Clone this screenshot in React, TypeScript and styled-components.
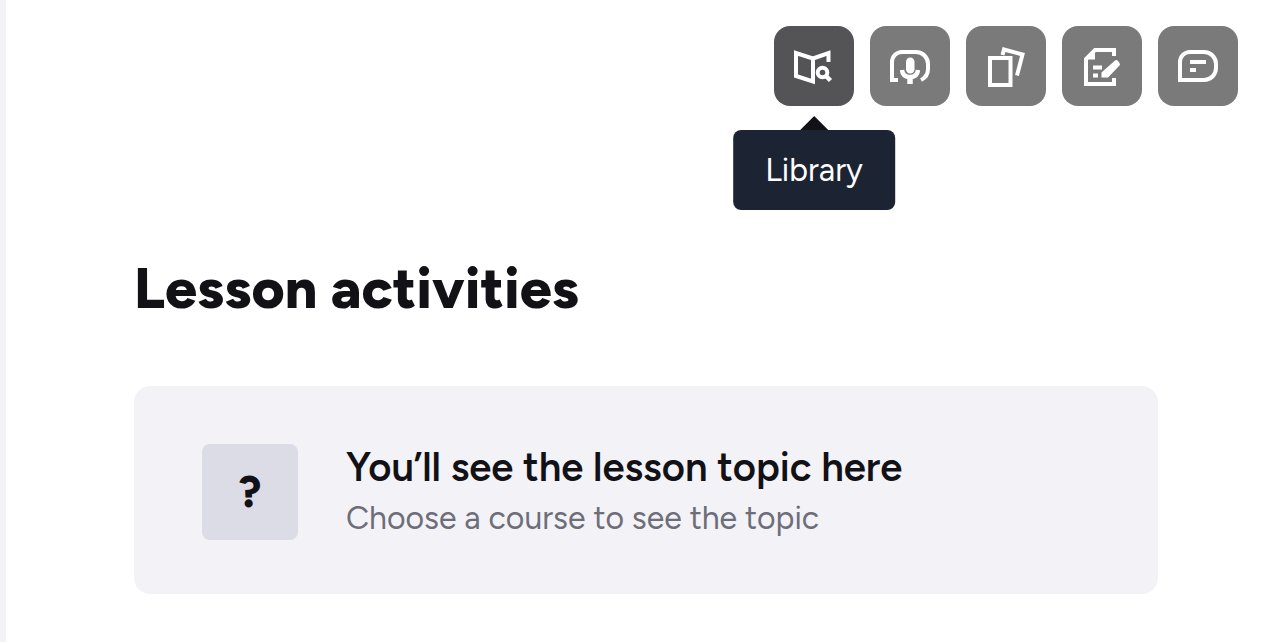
import React from 'react';
import styled, { createGlobalStyle } from 'styled-components';

const GlobalStyle = createGlobalStyle`
  *, *::before, *::after { box-sizing: border-box; }
  body {
    margin: 0;
    background: #ffffff;
    color: #111116;
    font-family: Figtree, Lato, "Liberation Sans", sans-serif;
  }
`;

const Page = styled.div`
  min-height: 100vh;
  border-left: 6px solid #f3f3f6;
`;

const Toolbar = styled.nav`
  display: flex;
  justify-content: flex-end;
  gap: 16px;
  padding: 26px 32px 0;
`;

const ToolItem = styled.div`
  position: relative;
`;

const ToolButton = styled.button<{ $active?: boolean }>`
  display: block;
  width: 80px;
  height: 80px;
  padding: 0;
  border: 0;
  border-radius: 16px;
  background: ${(p) => (p.$active ? '#545456' : '#7a7a7b')};
  color: #ffffff;
  cursor: pointer;
`;

const Glyph = styled.svg`
  display: block;
  width: 80px;
  height: 80px;
  fill: none;
  stroke: currentColor;
  stroke-width: 4;
`;

const Tooltip = styled.div`
  position: absolute;
  top: 104px;
  left: 50%;
  transform: translateX(-50%);
  padding: 20px 32px;
  border-radius: 8px;
  background: #1c2333;
  color: #ffffff;
  font-size: 32px;
  line-height: 40px;
  white-space: nowrap;

  &::before {
    content: '';
    position: absolute;
    bottom: 100%;
    left: 50%;
    margin-left: -14px;
    border: 14px solid transparent;
    border-top-width: 0;
    border-bottom-color: #111116;
  }
`;

const Main = styled.main`
  padding: 144px 112px 48px 128px;
`;

const Title = styled.h1`
  margin: 0 0 60px;
  font-size: 57px;
  line-height: 76px;
  font-weight: 800;
`;

const Card = styled.section`
  display: flex;
  align-items: center;
  gap: 48px;
  padding: 56px 68px 52px;
  border-radius: 16px;
  background: #f3f3f7;
`;

const Badge = styled.div`
  display: flex;
  flex: none;
  align-items: center;
  justify-content: center;
  width: 96px;
  height: 96px;
  border-radius: 8px;
  background: #dcdce6;
  font-size: 44px;
  line-height: 48px;
  font-weight: 800;
`;

const CardTitle = styled.h2`
  margin: 0 0 2px;
  font-size: 40px;
  line-height: 50px;
  font-weight: 560;
`;

const CardText = styled.p`
  margin: 0;
  color: #6e6e7a;
  font-size: 32px;
  line-height: 48px;
`;

const tools = [
  {
    label: 'Library',
    icon: (
      <>
        <path d="M22 27V50L39 55.500V32.500ZM39 32.500L54.500 27V36" />
        <circle cx="48.500" cy="46.500" r="4.800" />
        <path d="M51.500 49.500L56.500 54.500" strokeWidth="4.500" />
      </>
    ),
  },
  {
    label: 'Speaking',
    icon: (
      <>
        <path d="M28 54H22V36A10 10 0 0 1 32 26H46A12 12 0 0 1 58 38V43C58 49 55 52 51 54" />
        <rect x="36" y="31.500" width="8.500" height="16" rx="4.250" fill="currentColor" stroke="none" />
        <path d="M32 44C32.500 49 36 51 40 51S47.500 49 48 44" strokeWidth="4.500" />
        <path d="M40 51V58" strokeWidth="5.500" />
      </>
    ),
  },
  {
    label: 'Cards',
    icon: (
      <>
        <rect x="24" y="32" width="20.500" height="27" />
        <path d="M36.500 29L38 23.500L56.500 28.500L51 49.500" />
      </>
    ),
  },
  {
    label: 'Homework',
    icon: (
      <>
        <path d="M52 30V24H33L24 33V58H52V52" />
        <path d="M33 24V33.500H24Z" fill="currentColor" stroke="none" />
        <path d="M31 41.500H40M31 49.500H36" />
        <path d="M39.500 46.500L53 34.500Q54.500 33.500 56 35L57.500 37Q58.500 38.500 57.500 39.500L46 51.500H39.500Z" fill="currentColor" stroke="none" />
      </>
    ),
  },
  {
    label: 'Chat',
    icon: (
      <>
        <path d="M22 54V36A10 10 0 0 1 32 26H46A12 12 0 0 1 58 38V42A12 12 0 0 1 46 54Z" />
        <path d="M32 36H48M32 44H38" />
      </>
    ),
  },
];

export default function App() {
  return (
    <Page>
      <GlobalStyle />
      <Toolbar aria-label="Lesson tools">
        {tools.map((tool, i) => (
          <ToolItem key={tool.label}>
            <ToolButton type="button" aria-label={tool.label} $active={i === 0}>
              <Glyph viewBox="0 0 80 80" aria-hidden="true">{tool.icon}</Glyph>
            </ToolButton>
            {i === 0 && <Tooltip role="tooltip">{tool.label}</Tooltip>}
          </ToolItem>
        ))}
      </Toolbar>
      <Main>
        <Title>Lesson activities</Title>
        <Card>
          <Badge>?</Badge>
          <div>
            <CardTitle>You’ll see the lesson topic here</CardTitle>
            <CardText>Choose a course to see the topic</CardText>
          </div>
        </Card>
      </Main>
    </Page>
  );
}
